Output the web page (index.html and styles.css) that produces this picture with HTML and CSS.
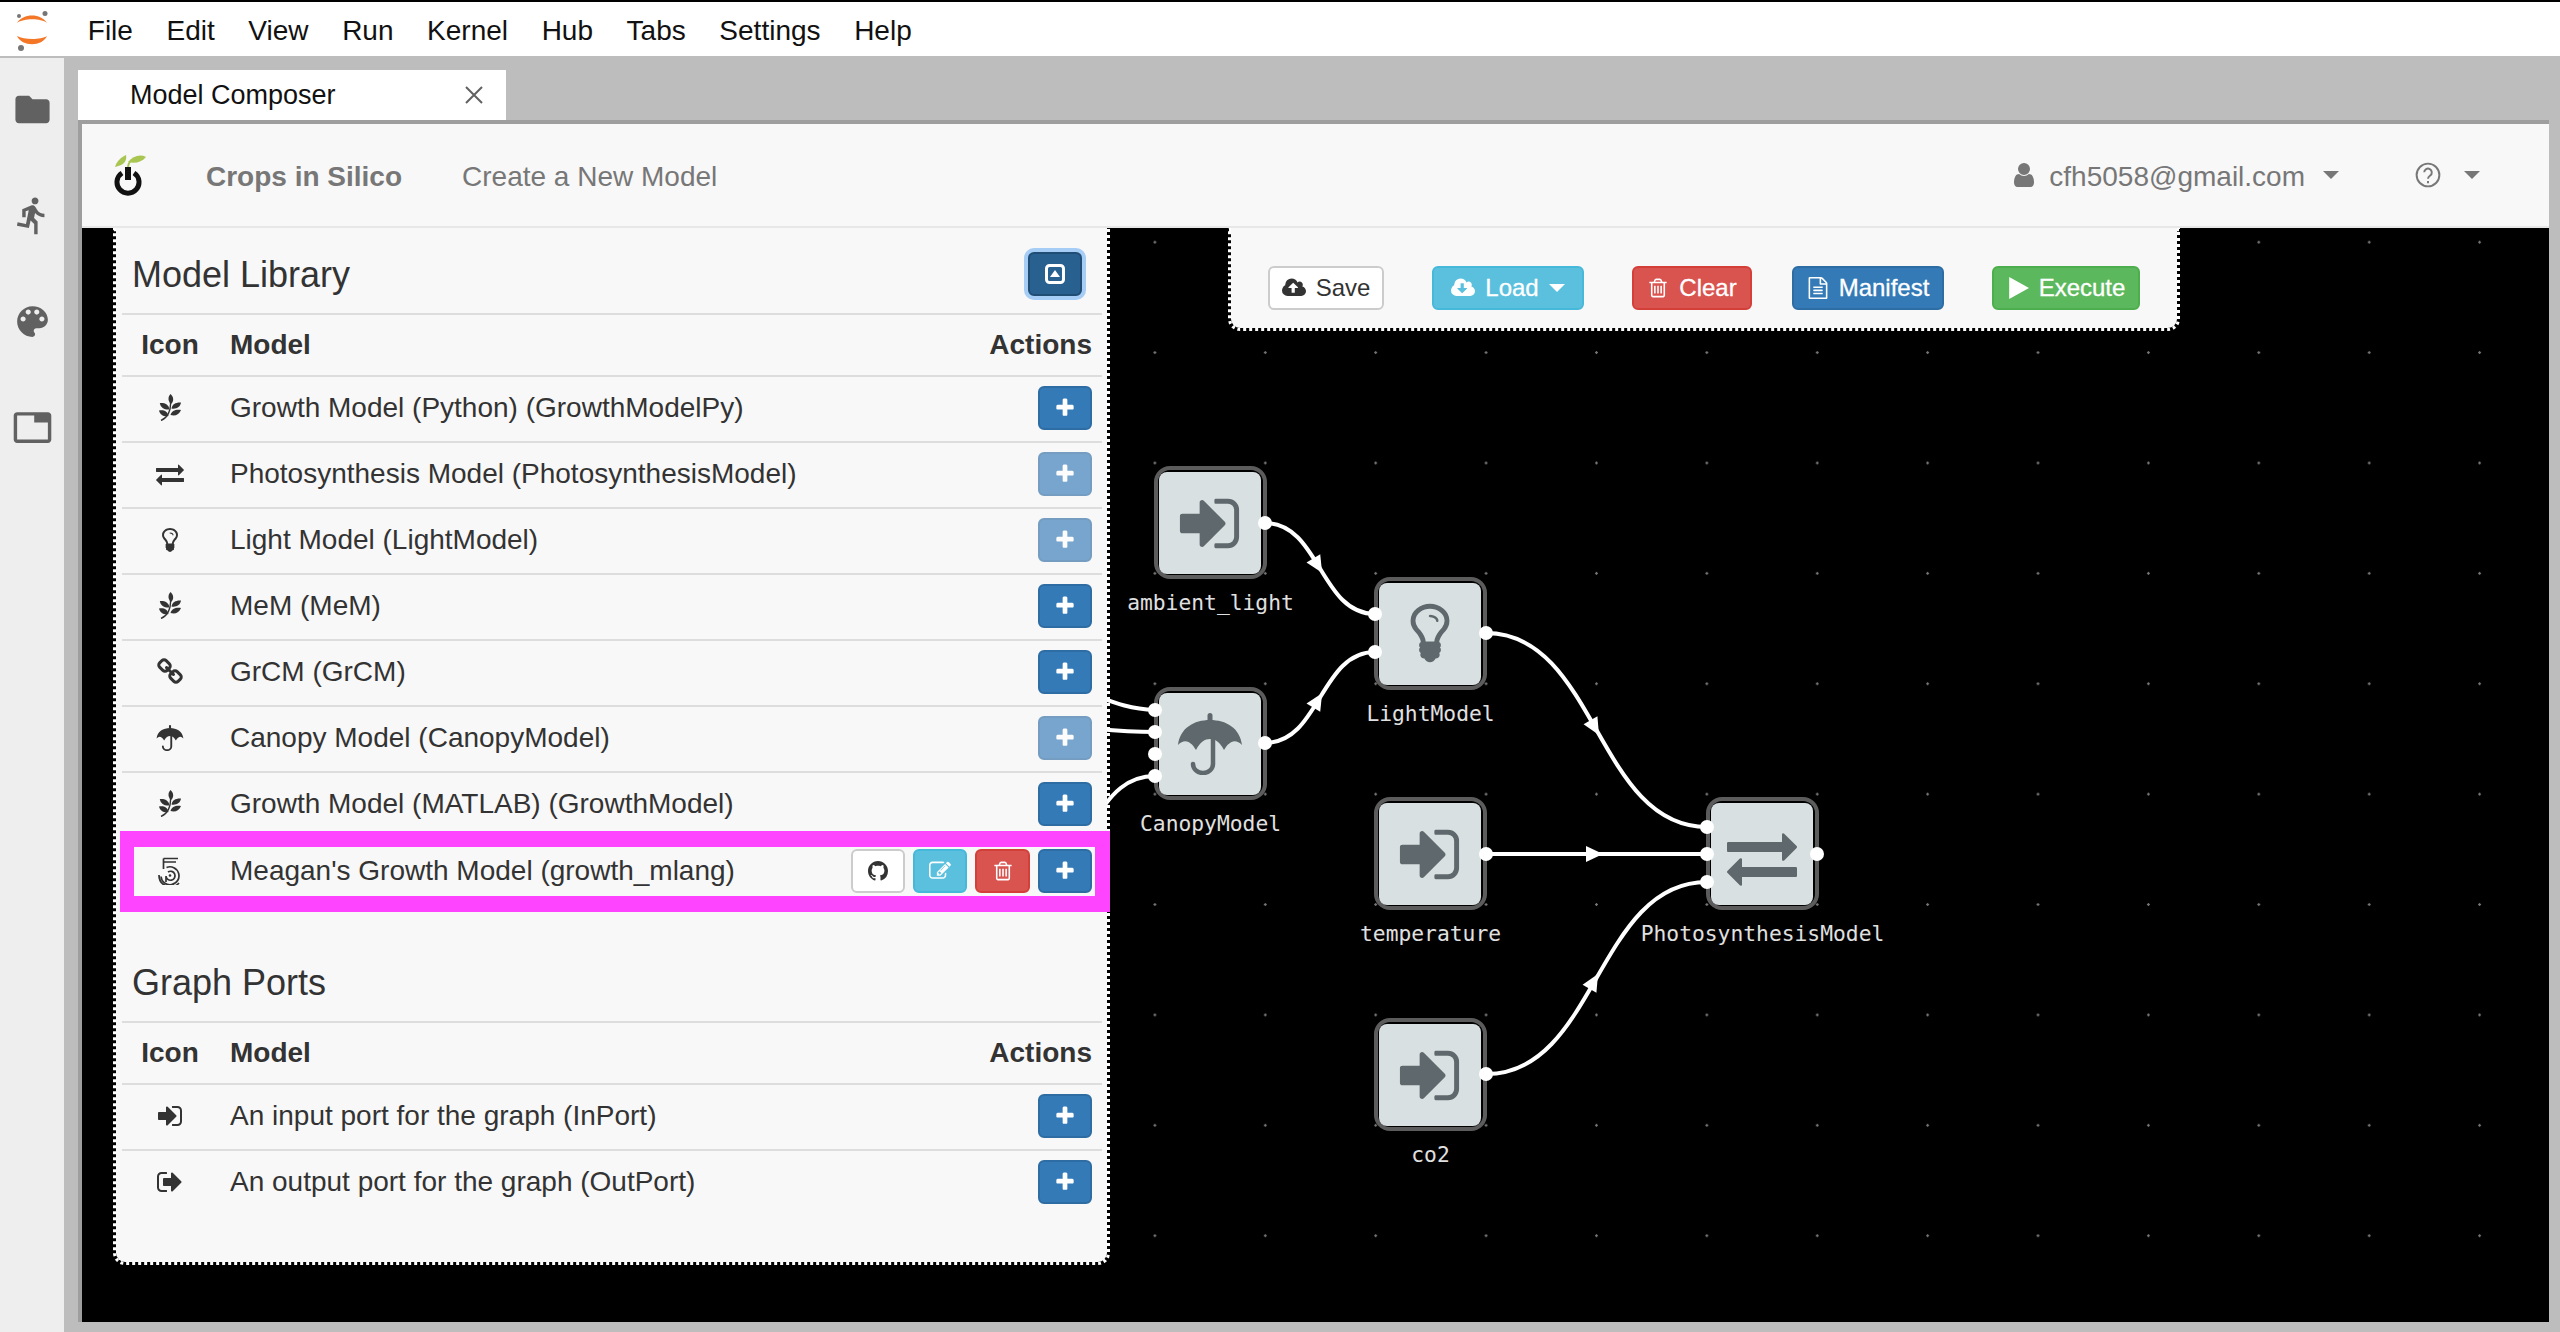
FILE: index.html
```html
<!DOCTYPE html>
<html lang="en">
<head>
    <meta charset="UTF-8">
    <title>Model Composer</title>
    <link rel="stylesheet" href="styles.css">
</head>
<body>
    <!-- icon set -->
    <svg class="icon-defs" xmlns="http://www.w3.org/2000/svg">
        <symbol id="i-folder" viewBox="0 0 24 24"><path d="M10 4H4c-1.1 0-1.99.9-1.99 2L2 18c0 1.1.9 2 2 2h16c1.1 0 2-.9 2-2V8c0-1.1-.9-2-2-2h-8l-2-2z"/></symbol>
        <symbol id="i-run" viewBox="0 0 24 24"><path d="M13.49 5.48c1.1 0 2-.9 2-2s-.9-2-2-2-2 .9-2 2 .9 2 2 2zm-3.6 13.9l1-4.4 2.1 2v6h2v-7.5l-2.1-2 .6-3c1.3 1.5 3.3 2.5 5.5 2.5v-2c-1.9 0-3.5-1-4.3-2.4l-1-1.6c-.4-.6-1-1-1.7-1-.3 0-.5.1-.8.1l-5.2 2.2v4.7h2v-3.4l1.8-.7-1.6 8.1-4.9-1-.4 2 7 1.4z"/></symbol>
        <symbol id="i-palette" viewBox="0 0 24 24"><path d="M12 3c-4.97 0-9 4.03-9 9s4.03 9 9 9c.83 0 1.5-.67 1.5-1.5 0-.39-.15-.74-.39-1.01-.23-.26-.38-.61-.38-.99 0-.83.67-1.5 1.5-1.5H16c2.76 0 5-2.24 5-5 0-4.42-4.03-8-9-8zm-5.5 9c-.83 0-1.5-.67-1.5-1.5S5.67 9 6.5 9 8 9.67 8 10.5 7.33 12 6.5 12zm3-4C8.67 8 8 7.33 8 6.5S8.67 5 9.5 5s1.5.67 1.5 1.5S10.33 8 9.5 8zm5 0c-.83 0-1.5-.67-1.5-1.5S13.67 5 14.5 5s1.5.67 1.5 1.5S15.33 8 14.5 8zm3 4c-.83 0-1.5-.67-1.5-1.5S16.67 9 17.5 9s1.5.67 1.5 1.5-.67 1.5-1.5 1.5z"/></symbol>
        <symbol id="i-tab" viewBox="0 0 24 24"><path d="M21 3H3c-1.1 0-2 .9-2 2v14c0 1.1.9 2 2 2h18c1.1 0 2-.9 2-2V5c0-1.1-.9-2-2-2zm0 16H3V5h10v4h8v10z"/></symbol>
        <symbol id="i-signin" viewBox="0 0 1792 1792"><path d="M1312 896q0 26-19 45l-544 544q-19 19-45 19t-45-19-19-45v-288h-448q-26 0-45-19t-19-45v-384q0-26 19-45t45-19h448v-288q0-26 19-45t45-19 45 19l544 544q19 19 19 45zm352-352v704q0 119-84.5 203.5t-203.5 84.5h-320q-13 0-22.5-9.5t-9.5-22.5q0-4-1-20t-.5-26.5 3-23.5 10-19.5 20.5-6.5h320q66 0 113-47t47-113v-704q0-66-47-113t-113-47h-312l-11.5-1-11.5-3-8-5.5-7-9-2-13.5q0-4-1-20t-.5-26.5 3-23.5 10-19.5 20.5-6.5h320q119 0 203.5 84.5t84.5 203.5z"/></symbol>
        <symbol id="i-signout" viewBox="0 0 1792 1792"><path d="M704 1440q0 4 1 20t.5 26.5-3 23.5-10 19.5-20.5 6.5h-320q-119 0-203.5-84.5t-84.5-203.5v-704q0-119 84.5-203.5t203.5-84.5h320q13 0 22.5 9.5t9.5 22.5q0 4 1 20t.5 26.5-3 23.5-10 19.5-20.5 6.5h-320q-66 0-113 47t-47 113v704q0 66 47 113t113 47h312l11.5 1 11.5 3 8 5.5 7 9 2 13.5zm928-544q0 26-19 45l-544 544q-19 19-45 19t-45-19-19-45v-288h-448q-26 0-45-19t-19-45v-384q0-26 19-45t45-19h448v-288q0-26 19-45t45-19 45 19l544 544q19 19 19 45z"/></symbol>
        <symbol id="i-exchange" viewBox="0 0 1792 1792"><path d="M1792 1184v192q0 13-9.5 22.5t-22.5 9.5h-1376v192q0 13-9.5 22.5t-22.5 9.5q-12 0-24-10l-319-320q-9-9-9-22 0-14 9-23l320-320q9-9 23-9 13 0 22.5 9.5t9.5 22.5v192h1376q13 0 22.5 9.5t9.5 22.5zm0-544q0 14-9 23l-320 320q-9 9-23 9-13 0-22.5-9.5t-9.5-22.5v-192h-1376q-13 0-22.5-9.5t-9.5-22.5v-192q0-13 9.5-22.5t22.5-9.5h1376v-192q0-14 9-23t23-9q12 0 24 10l319 319q9 9 9 23z"/></symbol>
        <symbol id="i-bulb" viewBox="0 0 1792 1792"><path d="M1120 576q0 13-9.5 22.5t-22.5 9.5-22.5-9.5-9.5-22.5q0-46-54-71t-106-25q-13 0-22.5-9.5t-9.5-22.5 9.5-22.5 22.5-9.5q50 0 99.5 16t87 54 37.5 90zm160 0q0-72-34.5-134t-90-101.5-123-62-136.5-22.5-136.5 22.5-123 62-90 101.5-34.5 134q0 101 68 180 10 11 30.5 33t30.5 33q128 153 141 298h228q13-145 141-298 10-11 30.5-33t30.5-33q68-79 68-180zm128 0q0 155-103 268-45 49-74.5 87t-59.5 95.5-34 107.5q47 28 47 82 0 37-25 64 25 27 25 64 0 52-45 81 13 23 13 47 0 46-31.5 71t-77.5 25q-20 44-60 70t-87 26-87-26-60-70q-46 0-77.5-25t-31.5-71q0-24 13-47-45-29-45-81 0-37 25-64-25-27-25-64 0-54 47-82-4-50-34-107.5t-59.5-95.5-74.5-87q-103-113-103-268 0-99 44.5-184.5t117-142 164-89 186.5-32.5 186.5 32.5 164 89 117 142 44.5 184.5z"/></symbol>
        <symbol id="i-link" viewBox="0 0 1792 1792"><path d="M1520 1216q0-40-28-68l-208-208q-28-28-68-28-42 0-72 32 3 3 19 18.5t21.5 21.5 15 19 13 25.5 3.5 27.5q0 40-28 68t-68 28q-15 0-27.5-3.5t-25.5-13-19-15-21.5-21.5-18.5-19q-33 31-33 73 0 40 28 68l206 207q27 27 68 27 40 0 68-26l147-146q28-28 28-67zm-703-705q0-40-28-68l-206-207q-28-28-68-28-39 0-68 27l-147 146q-28 28-28 67 0 40 28 68l208 208q27 27 68 27 42 0 72-31-3-3-19-18.5t-21.5-21.5-15-19-13-25.5-3.5-27.5q0-40 28-68t68-28q15 0 27.5 3.5t25.5 13 19 15 21.5 21.5 18.5 19q33-31 33-73zm895 705q0 120-85 203l-147 146q-83 83-203 83-121 0-204-85l-206-207q-83-83-83-203 0-123 88-209l-88-88q-86 88-208 88-120 0-204-84l-208-208q-84-84-84-204t85-203l147-146q83-83 203-83 121 0 204 85l206 207q83 83 83 203 0 123-88 209l88 88q86-88 208-88 120 0 204 84l208 208q84 84 84 204z"/></symbol>
        <symbol id="i-umbrella" viewBox="0 0 64 62"><path d="M0 32C2 15 16 7 32 7s30 8 32 25c-6-6-12-5-18 5-4-8-9-11-14-11s-10 3-14 11C12 27 6 26 0 32z"/><rect x="29.5" y="0" width="5" height="9" rx="2.5"/><path d="M35 26v25a10 9 0 0 1-20 0" fill="none" stroke="currentColor" stroke-width="4.5" stroke-linecap="round"/></symbol>
        <symbol id="i-leaf" viewBox="0 0 22 27"><path d="M11.500 0C15 3 15 7.500 12 10C9 7.500 8.500 3 11.500 0z"/><path d="M10.500 15.500C6 16 1.500 14 .8 9C5 8.500 10 10 10.500 15.500z"/><path d="M12.500 14.500C17 15.500 21.500 13 22 8.500C17.500 8 13 10 12.500 14.500z"/><path d="M9.500 22C5 23 1 21 0 16.500C4.500 15.500 9 17.500 9.500 22z"/><path d="M11.500 21C16 22.500 20.500 20.500 22 16C17.500 15 12.500 16.500 11.500 21z"/><path d="M11.500 8c.5 8-2.500 15.500-9.500 18.500" fill="none" stroke="currentColor" stroke-width="1.400"/></symbol>
        <symbol id="i-five" viewBox="0 0 24 28"><g fill="none" stroke="currentColor" stroke-width="1.700"><path d="M5.500 1.500H20M5.500 1.500V12M5.500 5H18"/><path d="M8.500 10.500A9 9 0 1 1 3 19.500"/><path d="M1 18a11.500 11.500 0 0 0 20 8"/><path d="M10 15a4.500 4.500 0 1 1-2 4v6"/></g><circle cx="12" cy="18.500" r="1.300"/></symbol>
        <symbol id="i-github" viewBox="0 0 16 16"><path d="M8 0C3.580 0 0 3.580 0 8c0 3.540 2.290 6.530 5.470 7.590.4.07.55-.17.55-.38 0-.19-.01-.82-.01-1.490-2.010.37-2.530-.49-2.690-.94-.09-.23-.48-.94-.82-1.130-.28-.15-.68-.52-.01-.53.63-.01 1.080.58 1.230.82.72 1.210 1.870.87 2.330.66.07-.52.28-.87.51-1.070-1.780-.2-3.640-.89-3.640-3.950 0-.87.31-1.590.82-2.150-.08-.2-.36-1.020.08-2.120 0 0 .67-.21 2.200.82.64-.18 1.320-.27 2-.27.68 0 1.360.09 2 .27 1.530-1.040 2.200-.82 2.200-.82.44 1.100.16 1.920.08 2.120.51.56.82 1.270.82 2.150 0 3.070-1.870 3.750-3.650 3.950.29.25.54.73.54 1.480 0 1.070-.01 1.930-.01 2.200 0 .21.15.46.55.38A8.013 8.013 0 0 0 16 8c0-4.420-3.580-8-8-8z"/></symbol>
        <symbol id="i-edit" viewBox="0 0 1792 1792"><path d="M888 1184l116-116-152-152-116 116v56h96v96h56zm440-720q-16-16-33 1l-350 350q-17 17-1 33t33-1l350-350q17-17 1-33zm80 594v190q0 119-84.500 203.500t-203.500 84.500h-832q-119 0-203.500-84.500t-84.500-203.500v-832q0-119 84.500-203.500t203.500-84.500h832q63 0 117 25 15 7 18 23 3 17-9 29l-49 49q-14 14-32 8-23-6-45-6h-832q-66 0-113 47t-47 113v832q0 66 47 113t113 47h832q66 0 113-47t47-113v-126q0-13 9-22l64-64q15-15 35-7t20 29zm-96-738l288 288-672 672h-288v-288zm444 132l-92 92-288-288 92-92q28-28 68-28t68 28l152 152q28 28 28 68t-28 68z"/></symbol>
        <symbol id="i-trash" viewBox="0 0 1792 1792"><path d="M704 736v576q0 14-9 23t-23 9h-64q-14 0-23-9t-9-23v-576q0-14 9-23t23-9h64q14 0 23 9t9 23zm256 0v576q0 14-9 23t-23 9h-64q-14 0-23-9t-9-23v-576q0-14 9-23t23-9h64q14 0 23 9t9 23zm256 0v576q0 14-9 23t-23 9h-64q-14 0-23-9t-9-23v-576q0-14 9-23t23-9h64q14 0 23 9t9 23zm128 724v-948h-896v948q0 22 7 40.500t14.500 27 10.500 8.500h832q3 0 10.500-8.500t14.500-27 7-40.500zm-672-1076h448l-48-117q-7-9-17-11h-317q-10 2-17 11zm928 32v64q0 14-9 23t-23 9h-96v948q0 83-47 143.500t-113 60.500h-832q-66 0-113-58.500t-47-141.500v-952h-96q-14 0-23-9t-9-23v-64q0-14 9-23t23-9h309l70-167q15-37 54-63t79-26h320q40 0 79 26t54 63l70 167h309q14 0 23 9t9 23z"/></symbol>
        <symbol id="i-plus" viewBox="0 0 1792 1792"><path d="M1600 736v192q0 40-28 68t-68 28h-416v416q0 40-28 68t-68 28h-192q-40 0-68-28t-28-68v-416h-416q-40 0-68-28t-28-68v-192q0-40 28-68t68-28h416v-416q0-40 28-68t68-28h192q40 0 68 28t28 68v416h416q40 0 68 28t28 68z"/></symbol>
        <symbol id="i-upload" viewBox="0 0 1920 1792"><path d="M1280 864q0-14-9-23l-352-352q-9-9-23-9t-23 9l-351 351q-10 12-10 24 0 14 9 23t23 9h224v352q0 13 9.500 22.500t22.500 9.500h192q13 0 22.500-9.500t9.500-22.500v-352h224q13 0 22.500-9.500t9.500-22.500zm640 288q0 159-112.500 271.500t-271.500 112.500h-1088q-185 0-316.500-131.500t-131.500-316.500q0-130 70-240t188-165q-2-30-2-43 0-212 150-362t362-150q156 0 285.500 87t188.500 231q71-62 166-62 106 0 181 75t75 181q0 76-41 138 130 31 213.500 135.500t83.500 238.500z"/></symbol>
        <symbol id="i-download" viewBox="0 0 1920 1792"><path d="M1280 928q0-14-9-23t-23-9h-224v-352q0-13-9.500-22.500t-22.500-9.500h-192q-13 0-22.500 9.500t-9.500 22.500v352h-224q-13 0-22.500 9.500t-9.500 22.500q0 14 9 23l352 352q9 9 23 9t23-9l351-351q10-12 10-24zm640 224q0 159-112.500 271.500t-271.500 112.500h-1088q-185 0-316.500-131.500t-131.500-316.500q0-130 70-240t188-165q-2-30-2-43 0-212 150-362t362-150q156 0 285.500 87t188.500 231q71-62 166-62 106 0 181 75t75 181q0 76-41 138 130 31 213.500 135.500t83.500 238.500z"/></symbol>
        <symbol id="i-file" viewBox="0 0 1792 1792"><path d="M1596 380q28 28 48 76t20 88v1152q0 40-28 68t-68 28h-1344q-40 0-68-28t-28-68v-1600q0-40 28-68t68-28h896q40 0 88 20t76 48zm-444-244v376h376q-10-29-22-41l-313-313q-12-12-41-22zm384 1528v-1024h-416q-40 0-68-28t-28-68v-416h-768v1536h1280zm-1024-864q0-14 9-23t23-9h704q14 0 23 9t9 23v64q0 14-9 23t-23 9h-704q-14 0-23-9t-9-23v-64zm736 224q14 0 23 9t9 23v64q0 14-9 23t-23 9h-704q-14 0-23-9t-9-23v-64q0-14 9-23t23-9h704zm0 256q14 0 23 9t9 23v64q0 14-9 23t-23 9h-704q-14 0-23-9t-9-23v-64q0-14 9-23t23-9h704z"/></symbol>
        <symbol id="i-user" viewBox="0 0 1792 1792"><path d="M1536 1399q0 109-62.500 187t-150.500 78h-854q-88 0-150.500-78t-62.500-187q0-85 8.500-160.500t31.500-152 58.500-131 94-89 134.500-34.500q131 128 313 128t313-128q76 0 134.500 34.500t94 89 58.500 131 31.500 152 8.500 160.500zm-256-887q0 159-112.500 271.500t-271.500 112.500-271.500-112.500-112.500-271.500 112.500-271.500 271.500-112.500 271.500 112.500 112.500 271.500z"/></symbol>
    </svg>

    <div class="menu-bar">
        <svg class="jp-logo" viewBox="0 0 34 42">
            <path class="jp-arc" d="M1 12C7 2 25 2 31 12C25 7 8 7 1 12z"/>
            <path class="jp-arc" d="M1 25C8 29 25 29 31 25C26 36 6 36 1 25z"/>
            <circle class="jp-moon" cx="3" cy="5" r="2"/>
            <circle class="jp-moon" cx="29" cy="2.500" r="2.500"/>
            <circle class="jp-moon" cx="5" cy="37" r="3"/>
        </svg>
        <span class="menu-item">File</span>
        <span class="menu-item">Edit</span>
        <span class="menu-item">View</span>
        <span class="menu-item">Run</span>
        <span class="menu-item">Kernel</span>
        <span class="menu-item">Hub</span>
        <span class="menu-item">Tabs</span>
        <span class="menu-item">Settings</span>
        <span class="menu-item">Help</span>
    </div>

    <div class="shell">
        <div class="side-bar">
            <div class="side-item"><svg class="side-icon"><use href="#i-folder"/></svg></div>
            <div class="side-item"><svg class="side-icon"><use href="#i-run"/></svg></div>
            <div class="side-item"><svg class="side-icon"><use href="#i-palette"/></svg></div>
            <div class="side-item"><svg class="side-icon"><use href="#i-tab"/></svg></div>
        </div>

        <div class="work-area">
            <div class="tab-strip">
                <div class="tab">
                    <span>Model Composer</span>
                    <svg class="tab-close" viewBox="0 0 18 18"><path d="M1 1L17 17M17 1L1 17"/></svg>
                </div>
            </div>

            <div class="app-frame">
                <div class="nav-bar">
                    <svg class="brand-logo" viewBox="0 0 32 42">
                        <path class="sprout" d="M1 13C3 6 8 3 12 1C13 6 11 11 1 13z"/>
                        <path class="sprout" d="M14 8C19 2 26 0 32 3C28 8 21 10 14 8z"/>
                        <path class="sprout-stem" d="M14 14C14 10 15 8 18 6"/>
                        <path class="power-ring" d="M8 19A11 11 0 1 0 20 19"/>
                        <path class="power-bar" d="M14 13V26"/>
                    </svg>
                    <span class="nav-brand">Crops in Silico</span>
                    <span class="nav-link">Create a New Model</span>
                    <div class="nav-right">
                        <svg class="nav-user"><use href="#i-user"/></svg>
                        <span class="nav-email">cfh5058@gmail.com</span>
                        <span class="caret nav-caret"></span>
                        <svg class="nav-help" viewBox="0 0 24 24">
                            <circle cx="12" cy="12" r="10.500"/>
                            <path d="M8.500 9.500a3.500 3.500 0 1 1 5.500 3c-1.300 .9-2 1.500-2 3"/>
                            <path d="M12 17.500v2"/>
                        </svg>
                        <span class="caret nav-caret nav-caret-last"></span>
                    </div>
                </div>

                <div class="canvas">
                    <svg class="graph" viewBox="82 228 2467 1094">
                        <!-- edges -->
                        <path class="edge" d="M1265 523C1320 523 1320 614 1375 614"/>
                        <path class="edge" d="M1265 743C1320 743 1320 652 1375 652"/>
                        <path class="edge" d="M1486 633C1596.500 633 1596.500 827 1707 827"/>
                        <path class="edge" d="M1485 854H1707"/>
                        <path class="edge" d="M1486 1074C1596.500 1074 1596.500 882 1707 882"/>
                        <path class="edge" d="M1040 680C1097 690 1110 708 1155 710"/>
                        <path class="edge" d="M1040 725C1100 728 1110 732 1155 732"/>
                        <path class="edge" d="M1090 830C1110 790 1130 776 1155 776"/>
                        <polygon class="arrow" points="-9,-8 8,0 -9,8" transform="translate(1318 566) rotate(59)"/>
                        <polygon class="arrow" points="-9,-8 8,0 -9,8" transform="translate(1318 700) rotate(-59)"/>
                        <polygon class="arrow" points="-9,-8 8,0 -9,8" transform="translate(1595 728) rotate(60)"/>
                        <polygon class="arrow" points="-9,-8 8,0 -9,8" transform="translate(1595 854)"/>
                        <polygon class="arrow" points="-9,-8 8,0 -9,8" transform="translate(1594 981) rotate(-60)"/>

                        <!-- nodes -->
                        <g transform="translate(1154 466)">
                            <rect class="node-frame" x="2" y="2" width="109" height="109" rx="14"/>
                            <rect class="node-box" x="5" y="6" width="102" height="102" rx="8"/>
                            <use class="node-icon" href="#i-signin" x="21" y="23" width="69" height="69"/>
                            <text class="node-label" x="56.500" y="144">ambient_light</text>
                        </g>
                        <g transform="translate(1374 577)">
                            <rect class="node-frame" x="2" y="2" width="109" height="109" rx="14"/>
                            <rect class="node-box" x="5" y="6" width="102" height="102" rx="8"/>
                            <use class="node-icon" href="#i-bulb" x="22" y="22" width="68" height="68"/>
                            <text class="node-label" x="56.500" y="144">LightModel</text>
                        </g>
                        <g transform="translate(1154 687)">
                            <rect class="node-frame" x="2" y="2" width="109" height="109" rx="14"/>
                            <rect class="node-box" x="5" y="6" width="102" height="102" rx="8"/>
                            <use class="node-icon" href="#i-umbrella" x="24" y="26" width="64" height="62"/>
                            <text class="node-label" x="56.500" y="144">CanopyModel</text>
                        </g>
                        <g transform="translate(1374 797)">
                            <rect class="node-frame" x="2" y="2" width="109" height="109" rx="14"/>
                            <rect class="node-box" x="5" y="6" width="102" height="102" rx="8"/>
                            <use class="node-icon" href="#i-signin" x="21" y="23" width="69" height="69"/>
                            <text class="node-label" x="56.500" y="144">temperature</text>
                        </g>
                        <g transform="translate(1374 1018)">
                            <rect class="node-frame" x="2" y="2" width="109" height="109" rx="14"/>
                            <rect class="node-box" x="5" y="6" width="102" height="102" rx="8"/>
                            <use class="node-icon" href="#i-signin" x="21" y="23" width="69" height="69"/>
                            <text class="node-label" x="56.500" y="144">co2</text>
                        </g>
                        <g transform="translate(1706 797)">
                            <rect class="node-frame" x="2" y="2" width="109" height="109" rx="14"/>
                            <rect class="node-box" x="5" y="6" width="102" height="102" rx="8"/>
                            <use class="node-icon" href="#i-exchange" x="21" y="25" width="70" height="70"/>
                            <text class="node-label" x="56.500" y="144">PhotosynthesisModel</text>
                        </g>

                        <!-- ports -->
                        <g class="ports">
                            <circle cx="1265" cy="523" r="7"/>
                            <circle cx="1375" cy="614" r="7"/>
                            <circle cx="1375" cy="652" r="7"/>
                            <circle cx="1486" cy="633" r="7"/>
                            <circle cx="1155" cy="710" r="7"/>
                            <circle cx="1155" cy="732" r="7"/>
                            <circle cx="1155" cy="754" r="7"/>
                            <circle cx="1155" cy="776" r="7"/>
                            <circle cx="1265" cy="743" r="7"/>
                            <circle cx="1486" cy="854" r="7"/>
                            <circle cx="1486" cy="1074" r="7"/>
                            <circle cx="1707" cy="827" r="7"/>
                            <circle cx="1707" cy="854" r="7"/>
                            <circle cx="1707" cy="882" r="7"/>
                            <circle cx="1817" cy="854" r="7"/>
                        </g>
                    </svg>

                    <div class="toolbar-panel">
                        <button class="btn btn-default btn-save"><svg class="btn-icon btn-icon-cloud"><use href="#i-upload"/></svg>Save</button>
                        <button class="btn btn-info btn-load"><svg class="btn-icon btn-icon-cloud"><use href="#i-download"/></svg>Load<span class="caret caret-white"></span></button>
                        <button class="btn btn-danger btn-clear"><svg class="btn-icon"><use href="#i-trash"/></svg>Clear</button>
                        <button class="btn btn-primary btn-manifest"><svg class="btn-icon"><use href="#i-file"/></svg>Manifest</button>
                        <button class="btn btn-success btn-execute"><svg class="btn-icon" viewBox="0 0 20 20"><path d="M2 0L20 10L2 20z"/></svg>Execute</button>
                    </div>

                    <div class="library-panel">
                        <div class="section-head">
                            <h3>Model Library</h3>
                            <button class="btn-collapse">
                                <svg viewBox="0 0 20 20"><rect x="1.500" y="1.500" width="17" height="17" rx="3"/><path d="M10 6L15 13H5z"/></svg>
                            </button>
                        </div>
                        <div class="row row-head"><span class="col-icon">Icon</span><span class="col-name">Model</span><span class="col-actions">Actions</span></div>
                        <div class="row">
                            <span class="col-icon"><svg class="row-icon"><use href="#i-leaf" x="3" width="22" height="27"/></svg></span>
                            <span class="col-name">Growth Model (Python) (GrowthModelPy)</span>
                            <span class="col-actions"><button class="act act-add"><svg><use href="#i-plus"/></svg></button></span>
                        </div>
                        <div class="row">
                            <span class="col-icon"><svg class="row-icon"><use href="#i-exchange"/></svg></span>
                            <span class="col-name">Photosynthesis Model (PhotosynthesisModel)</span>
                            <span class="col-actions"><button class="act act-add act-off"><svg><use href="#i-plus"/></svg></button></span>
                        </div>
                        <div class="row">
                            <span class="col-icon"><svg class="row-icon"><use href="#i-bulb"/></svg></span>
                            <span class="col-name">Light Model (LightModel)</span>
                            <span class="col-actions"><button class="act act-add act-off"><svg><use href="#i-plus"/></svg></button></span>
                        </div>
                        <div class="row">
                            <span class="col-icon"><svg class="row-icon"><use href="#i-leaf" x="3" width="22" height="27"/></svg></span>
                            <span class="col-name">MeM (MeM)</span>
                            <span class="col-actions"><button class="act act-add"><svg><use href="#i-plus"/></svg></button></span>
                        </div>
                        <div class="row">
                            <span class="col-icon"><svg class="row-icon"><use href="#i-link"/></svg></span>
                            <span class="col-name">GrCM (GrCM)</span>
                            <span class="col-actions"><button class="act act-add"><svg><use href="#i-plus"/></svg></button></span>
                        </div>
                        <div class="row">
                            <span class="col-icon"><svg class="row-icon"><use href="#i-umbrella" y="1" width="28" height="26"/></svg></span>
                            <span class="col-name">Canopy Model (CanopyModel)</span>
                            <span class="col-actions"><button class="act act-add act-off"><svg><use href="#i-plus"/></svg></button></span>
                        </div>
                        <div class="row">
                            <span class="col-icon"><svg class="row-icon"><use href="#i-leaf" x="3" width="22" height="27"/></svg></span>
                            <span class="col-name">Growth Model (MATLAB) (GrowthModel)</span>
                            <span class="col-actions"><button class="act act-add"><svg><use href="#i-plus"/></svg></button></span>
                        </div>
                        <div class="row row-marked">
                            <span class="col-icon"><svg class="row-icon"><use href="#i-five" x="2" width="24" height="28"/></svg></span>
                            <span class="col-name">Meagan's Growth Model (growth_mlang)</span>
                            <span class="col-actions">
                                <button class="act act-git"><svg><use href="#i-github" x="1" y="1" width="20" height="20"/></svg></button>
                                <button class="act act-edit"><svg><use href="#i-edit"/></svg></button>
                                <button class="act act-del"><svg><use href="#i-trash"/></svg></button>
                                <button class="act act-add"><svg><use href="#i-plus"/></svg></button>
                            </span>
                        </div>

                        <div class="section-head section-head-next">
                            <h3>Graph Ports</h3>
                        </div>
                        <div class="row row-head"><span class="col-icon">Icon</span><span class="col-name">Model</span><span class="col-actions">Actions</span></div>
                        <div class="row">
                            <span class="col-icon"><svg class="row-icon"><use href="#i-signin"/></svg></span>
                            <span class="col-name">An input port for the graph (InPort)</span>
                            <span class="col-actions"><button class="act act-add"><svg><use href="#i-plus"/></svg></button></span>
                        </div>
                        <div class="row">
                            <span class="col-icon"><svg class="row-icon"><use href="#i-signout"/></svg></span>
                            <span class="col-name">An output port for the graph (OutPort)</span>
                            <span class="col-actions"><button class="act act-add"><svg><use href="#i-plus"/></svg></button></span>
                        </div>
                    </div>
                </div>
            </div>
        </div>
    </div>
</body>
</html>
```
FILE: styles.css
```css
* { box-sizing: border-box; }
html, body { height: 100%; }
body { margin: 0; height: 1332px; overflow: hidden; display: flex; flex-direction: column; background: #bdbdbd; font-family: "Liberation Sans", Arial, sans-serif; color: #333; }
button { font-family: inherit; margin: 0; }
.icon-defs { position: absolute; width: 0; height: 0; overflow: hidden; }

/* top menu */
.menu-bar { height: 56px; flex: none; display: flex; align-items: center; background: #fff; border-top: 2px solid #000; padding-left: 16px; }
.jp-logo { width: 34px; height: 42px; margin: 6px 21px 0 0; flex: none; }
.jp-arc { fill: #f37726; }
.jp-moon { fill: #767677; }
.menu-item { font-size: 28px; color: #111; padding: 4px 16.800px 0; }

/* left rail + work area */
.shell { flex: 1; display: flex; min-height: 0; }
.side-bar { width: 64px; flex: none; margin-top: 2px; background: #eee; }
.side-item { height: 106px; display: flex; align-items: center; justify-content: center; }
.side-item:first-child { margin-top: -2px; }
.side-icon { width: 41px; height: 41px; fill: #616161; }
.work-area { flex: 1; display: flex; flex-direction: column; padding: 14px 11px 10px 14px; min-width: 0; }
.tab-strip { height: 50px; flex: none; }
.tab { width: 428px; height: 50px; background: #fff; display: flex; align-items: center; justify-content: space-between; padding: 0 23px 0 52px; font-size: 27px; color: #111; }
.tab-close { width: 18px; height: 18px; fill: none; stroke: #616161; stroke-width: 2; }
.app-frame { flex: 1; display: flex; flex-direction: column; border-top: 4px solid #9e9e9e; border-left: 4px solid #9e9e9e; min-height: 0; }

/* app navbar */
.nav-bar { height: 104px; flex: none; display: flex; align-items: center; background: #f8f8f8; border-bottom: 2px solid #e7e7e7; padding: 0 69px 0 32px; font-size: 28px; color: #777; }
.brand-logo { width: 32px; height: 42px; flex: none; margin-right: 60px; }
.sprout { fill: #a9c653; }
.sprout-stem { fill: none; stroke: #a9c653; stroke-width: 2; }
.power-ring { fill: none; stroke: #111; stroke-width: 5; }
.power-bar { fill: none; stroke: #111; stroke-width: 6; }
.nav-brand, .nav-link, .nav-email { padding-top: 3px; }
.nav-brand { font-weight: bold; }
.nav-link { margin-left: 60px; }
.nav-right { margin-left: auto; display: flex; align-items: center; }
.nav-user { width: 28px; height: 28px; fill: #777; margin-right: 11px; }
.nav-help { width: 26px; height: 26px; fill: none; stroke: #777; stroke-width: 1.800; margin-left: 76px; }
.caret { display: inline-block; width: 0; height: 0; border-left: 8px solid transparent; border-right: 8px solid transparent; border-top: 8px solid #777; }
.nav-caret { margin-left: 18px; }
.nav-caret-last { margin-left: 23px; }
.caret-white { border-top-color: #fff; margin-left: 10px; }

/* graph canvas */
.canvas { flex: 1; position: relative; min-height: 0; background-color: #000; background-image: radial-gradient(circle, #777 0, #777 1px, transparent 1.500px); background-size: 110.400px 110.400px; background-position: 24.200px -41px; overflow: hidden; }
.graph { position: absolute; left: 0; top: 0; width: 2467px; height: 1094px; }
.edge { fill: none; stroke: #fff; stroke-width: 4; }
.arrow { fill: #fff; }
.node-frame { fill: #000; stroke: #5c5c5c; stroke-width: 4; }
.node-box { fill: #d9e0e2; }
.node-icon { fill: #5f686c; color: #5f686c; }
.node-label { fill: #e0e0e0; font-family: "DejaVu Sans Mono", "Liberation Mono", monospace; font-size: 21.300px; text-anchor: middle; }
.ports circle { fill: #fff; }

/* floating panels */
.toolbar-panel { position: absolute; left: 1146px; top: 0; width: 952px; height: 103px; display: flex; gap: 48px; padding: 38px 0 0 37px; background: #f8f8f8; background-clip: padding-box; border: 3px dotted #fff; border-top: 0; border-radius: 0 0 12px 12px; }
.library-panel { position: absolute; left: 31px; top: 0; width: 997px; height: 1037px; padding: 0 5px 0 6px; background: #f8f8f8; background-clip: padding-box; border: 3px dotted #fff; border-top: 0; border-radius: 0 0 12px 12px; }

/* toolbar buttons */
.btn { height: 44px; display: inline-flex; align-items: center; justify-content: center; padding: 0; border: 2px solid transparent; border-radius: 6px; font-size: 24px; color: #fff; -webkit-text-stroke: 0.3px currentColor; }
.btn-icon { width: 22px; height: 22px; fill: currentColor; margin-right: 10px; }
.btn-icon-cloud { width: 24px; height: 24px; }
.btn-default { background: #fff; border-color: #ccc; color: #333; -webkit-text-stroke: 0; }
.btn-info { background: #5bc0de; border-color: #46b8da; }
.btn-danger { background: #d9534f; border-color: #d43f3a; }
.btn-primary { background: #337ab7; border-color: #2e6da4; }
.btn-success { background: #5cb85c; border-color: #4cae4c; }
.btn-save { width: 116px; }
.btn-load { width: 152px; }
.btn-clear { width: 120px; margin-right: -8px; }
.btn-manifest { width: 152px; }
.btn-execute { width: 148px; }

/* model tables */
.section-head { height: 78px; margin-top: 7px; display: flex; align-items: center; justify-content: space-between; padding: 0 20px 0 10px; }
.section-head-next { margin-top: 31px; }
.section-head h3 { margin: 0; padding-top: 2px; font-size: 36px; font-weight: normal; color: #333; }
.btn-collapse { width: 54px; height: 44px; padding: 0; display: flex; align-items: center; justify-content: center; background: #286090; border: 2px solid #204d74; border-radius: 6px; box-shadow: 0 0 0 4px #a5cdf6; }
.btn-collapse svg { width: 20px; height: 20px; fill: #fff; }
.btn-collapse rect { fill: none; stroke: #fff; stroke-width: 3; }
.row { height: 66px; padding-bottom: 2px; display: flex; align-items: center; border-top: 2px solid #ddd; font-size: 28px; color: #333; }
.row-head { height: 62px; padding-bottom: 0; font-weight: bold; }
.col-icon { width: 96px; flex: none; display: flex; justify-content: center; }
.col-name { margin-left: 12px; flex: 1; }
.col-actions { margin-right: 10px; display: flex; gap: 8px; }
.row-icon { width: 28px; height: 28px; fill: #333; color: #333; display: block; }
.row-marked { position: relative; height: 81px; margin: -6px -8px 0 -2px; border: 16px solid #ff44ff; border-left-width: 14px; border-right-width: 15px; background: #f8f8f8; }
.row-marked .col-icon { width: 72px; }
.row-marked .col-name { margin-left: 24px; }
.row-marked .col-actions { margin-right: 3px; }
.act { width: 54px; height: 44px; padding: 0; display: flex; align-items: center; justify-content: center; border: 2px solid transparent; border-radius: 6px; }
.act svg { width: 22px; height: 22px; fill: #fff; }
.act-add { background: #337ab7; border-color: #2e6da4; }
.act-off { opacity: 0.65; }
.act-git { background: #fff; border-color: #ccc; }
.act-git svg { fill: #333; }
.act-edit { background: #5bc0de; border-color: #46b8da; }
.act-del { background: #d9534f; border-color: #d43f3a; width: 55px; }
```
